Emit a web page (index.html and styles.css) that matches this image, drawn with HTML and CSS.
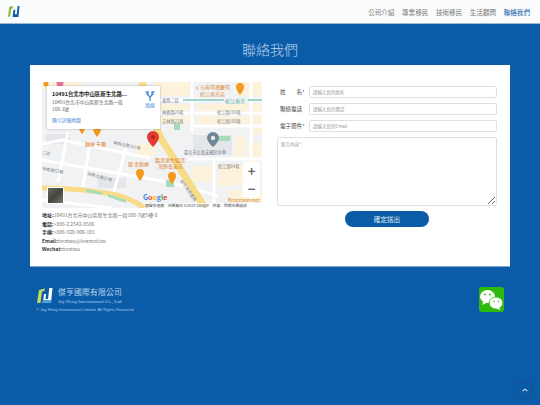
FILE: index.html
```html
<!DOCTYPE html>
<html lang="zh-Hant">
<head>
  <meta charset="UTF-8" />
  <meta name="viewport" content="width=device-width, initial-scale=1.0" />
  <title>聯絡我們</title>
  <link rel="stylesheet" href="styles.css">
</head>
<body>
  <header class="topbar">
    <svg class="logo" viewBox="0 0 14 14">
      <path d="M1 13 L2.500 2 L6.500 1 L6 4 L4.500 4 L3.500 12 Z" fill="#8dbb3e" />
      <path d="M6 13 L7 5 L9 5 L8.500 10 L10.500 10 L11.500 1 L13.500 1 L12.300 13 Z" fill="#0b5ca8" />
    </svg>
    <nav class="nav">
      <a>公司介紹</a>
      <a>專業移民</a>
      <a>技術移民</a>
      <a>生活顧問</a>
      <a class="active">聯絡我們</a>
    </nav>
  </header>

  <main class="content">
    <h1 class="title">聯絡我們</h1>
    <section class="card">
      <div class="left">
        <div class="map">
          <svg class="map-art" viewBox="0 0 220 126">
            <rect width="220" height="126" fill="#f1f2f4" />
            <g fill="#fdf3dc">
              <rect x="0" y="0" width="40" height="8" />
              <rect x="112" y="0" width="36" height="14" />
              <rect x="196" y="0" width="12" height="14" />
              <rect x="211" y="0" width="9" height="14" />
              <rect x="118" y="22" width="30" height="7" />
              <rect x="118" y="34" width="30" height="8" />
              <rect x="156" y="22" width="50" height="7" />
              <rect x="156" y="34" width="50" height="9" />
              <rect x="211" y="22" width="9" height="30" />
              <rect x="193" y="54" width="10" height="22" />
              <rect x="176" y="82" width="26" height="22" />
              <rect x="206" y="60" width="14" height="20" />
              <rect x="94" y="62" width="20" height="12" />
              <rect x="150" y="84" width="20" height="16" />
              <rect x="186" y="108" width="34" height="12" />
            </g>
            <g fill="#e4e6ea">
              <rect x="151" y="53" width="39" height="20" />
              <rect x="4" y="52" width="24" height="10" />
              <rect x="56" y="96" width="28" height="10" />
            </g>
            <g stroke="#fff" stroke-width="3" fill="none">
              <path d="M0 78 L131 101 L176 114" />
              <path d="M0 62 L20 58 L108 76" />
              <path d="M48 60 L41 105" />
              <path d="M84 66 L72 110" />
              <path d="M26 50 L16 100" />
              <path d="M113 18 H220" />
              <path d="M113 31 H220" />
              <path d="M150 44 H220" />
              <path d="M150 0 V50" />
              <path d="M209 0 V126" />
              <path d="M146 77 H220" />
              <path d="M172 77 V126" />
              <path d="M0 118 L70 126" />
            </g>
            <path d="M100 0 L112 41 L120 58 L160 121 L163 126" stroke="#f9dc87" stroke-width="7" fill="none" />
            <path d="M0 106 C25 106 55 109 75 113 C85 116 95 120 102 126" stroke="#f9dc87" stroke-width="5" fill="none" />
            <path d="M141 18 H220" stroke="#3fa98a" stroke-width="1" fill="none" />
            <rect x="182" y="15" width="24" height="7" fill="#f1f2f4" />
            <g fill="#a8dcb8">
              <path d="M44 107 L60 110 L60 113 L44 110 Z" />
              <path d="M66 112 L84 118 L84 121 L66 115 Z" />
              <rect x="124" y="98" width="8" height="7" />
              <rect x="132" y="41" width="6" height="7" />
              <rect x="174" y="54" width="14" height="5" />
            </g>
            <circle cx="18" cy="1" r="3.500" fill="#ee6f9a" />
            <circle cx="4" cy="2" r="2.500" fill="#f39a1e" />
            <g class="label-orange">
              <text x="43" y="64">麵屋 千壽</text>
              <text x="153" y="7">くら寿司資慶司</text>
              <text x="158" y="14">松江南京店</text>
              <text x="86" y="84">榮 串燒屋</text>
              <text x="113" y="80">臨津港生猛活</text>
              <text x="116" y="86">海鮮長安店</text>
              <text x="186" y="120">Broccoeeeeer</text>
            </g>
            <g class="label-grey">
              <text x="120" y="20">東路二段</text>
              <text x="120" y="32">林森路26巷</text>
              <text x="120" y="41">吉林路22巷</text>
              <text x="175" y="32">松江路106巷</text>
              <text x="175" y="41">松江路100巷</text>
              <text x="142" y="72">臺北市立長安國民中學</text>
              <text x="176" y="86">松江路64巷</text>
              <text x="71" y="62" transform="rotate(12 71 62)">林森北路107巷</text>
              <text x="45" y="93" transform="rotate(15 45 93)">林森北路67巷</text>
              <text x="0" y="72" transform="rotate(10 0 72)">二段</text>
              <text x="0" y="88" transform="rotate(10 0 88)">林森路53巷</text>
              <text x="138" y="99" transform="rotate(55 138 99)">新生高架道路</text>
            </g>
            <text class="label-teal" x="183" y="21">松江南京</text>
            <g fill="#f39a1e">
              <path d="M36 44 a4 4 0 1 1 8 0 c0 3 -4 8 -4 8 s-4 -5 -4 -8z" />
              <path d="M51 47 a4 4 0 1 1 8 0 c0 3 -4 8 -4 8 s-4 -5 -4 -8z" />
              <path d="M94 91 a4 4 0 1 1 8 0 c0 3 -4 8 -4 8 s-4 -5 -4 -8z" />
              <path d="M126 94 a4 4 0 1 1 8 0 c0 3 -4 8 -4 8 s-4 -5 -4 -8z" />
              <path d="M194 5 a4 4 0 1 1 8 0 c0 3 -4 8 -4 8 s-4 -5 -4 -8z" />
            </g>
            <path d="M165 56 a6 6 0 1 1 12 0 c0 4 -6 9 -6 9 s-6 -5 -6 -9z" fill="#6d8799" />
            <circle cx="171" cy="56" r="2.200" fill="#e4e6ea" />
            <path d="M105 55 a6 6 0 1 1 12 0 c0 4 -6 10 -6 10 s-6 -6 -6 -10z" fill="#e23b33" />
            <circle cx="111" cy="55" r="1.800" fill="#a81f1a" />
            <rect x="103" y="121" width="117" height="5" fill="#fff" opacity="0.8" />
            <text class="label-google" x="101" y="118"><tspan fill="#4285f4">G</tspan><tspan fill="#ea4335">o</tspan><tspan fill="#fbbc05">o</tspan><tspan fill="#4285f4">g</tspan><tspan fill="#34a853">l</tspan><tspan fill="#ea4335">e</tspan></text>
            <text class="label-attrib" x="103" y="125">鍵盤快速鍵　地圖資料 ©2023 Google　條款　回報地圖錯誤</text>
          </svg>
          <div class="map-info">
            <div class="map-text">
              <strong>10491台北市中山區新生北路...</strong>
              <p>10491台北市中山區新生北路一段<br>108-3號</p>
              <a>顯示詳細地圖</a>
            </div>
            <div class="map-route">
              <svg viewBox="0 0 10 10"><path d="M5 10 V6 L1.500 2.500 M5 6 L8.500 2.500 M0.500 1 H3 V3.500 M9.500 1 H7 V3.500" stroke="#3f86d8" stroke-width="1.300" fill="none" /></svg>
              <span>路線</span>
            </div>
          </div>
          <div class="map-thumb"></div>
          <div class="map-zoom"><span>+</span><span>−</span></div>
        </div>
        <ul class="info">
          <li><b>地址:</b>10491台北市中山區新生北路一段108-3號5樓-8</li>
          <li><b>電話:</b>+886-2 2542-8586</li>
          <li><b>手機:</b>+886-920-906-101</li>
          <li><b>Email:</b>tinatwu@livemail.tw</li>
          <li><b>Wechat:</b>tinatwu</li>
        </ul>
      </div>

      <form class="form">
        <label class="row"><span class="name">姓<i></i>名<em>*</em></span><input type="text" placeholder="請輸入您的姓名"></label>
        <label class="row"><span class="name">聯絡電話</span><input type="text" placeholder="請輸入您的電話"></label>
        <label class="row"><span class="name">電子郵件<em>*</em></span><input type="text" placeholder="請輸入您的Email"></label>
        <textarea placeholder="留言內容*"></textarea>
        <button type="button">確定送出</button>
      </form>
    </section>
  </main>

  <footer class="footer">
    <div class="brand">
      <div class="brand-top">
        <svg class="brand-logo" viewBox="0 0 18 18">
          <path d="M1 16 L3 3 L9 1.500 L8.500 4 L6 4.500 L4.500 16 Z" fill="#c5d95a" />
          <path d="M7 16 L8 7 L10 7 L9.500 12 L12 12 L13.300 1 L16.500 1 L15 16 Z" fill="#fff" />
          <path d="M6 16 L7 13 H15 V16 Z" fill="#4aa3df" />
        </svg>
        <div class="brand-name">
          <strong>傑亨國際有限公司</strong>
          <span>Jay Heng International Co., Ltd.</span>
        </div>
      </div>
      <p class="copy">© Jay Heng International Limited. All Rights Reserved.</p>
    </div>
    <div class="wechat">
      <svg viewBox="0 0 25 25">
        <ellipse cx="8.500" cy="9.500" rx="7.500" ry="6.500" fill="#fff" />
        <path d="M4 14 L3.500 18 L8 15.500 Z" fill="#fff" />
        <ellipse cx="17" cy="16" rx="6.800" ry="6" fill="#fff" stroke="#2dbb0e" stroke-width="0.800" />
        <path d="M20 20.500 L21.500 23 L17 21.500 Z" fill="#fff" />
        <circle cx="6" cy="7.500" r="0.900" fill="#2dbb0e" />
        <circle cx="11" cy="7.500" r="0.900" fill="#2dbb0e" />
        <circle cx="15" cy="14.500" r="0.800" fill="#2dbb0e" />
        <circle cx="19.500" cy="14.500" r="0.800" fill="#2dbb0e" />
      </svg>
    </div>
  </footer>

  <a class="to-top">
    <svg viewBox="0 0 10 6"><path d="M1 5 L5 1.500 L9 5" stroke="#cfe2f5" stroke-width="1.800" fill="none" /></svg>
  </a>
</body>
</html>
```

FILE: styles.css
```css
* {
  box-sizing: border-box;
}

html, body {
  height: 100%;
}

body {
  margin: 0;
  background-color: #0b5ca8;
  overflow: hidden;
  font-family: "Noto Sans CJK TC", "Liberation Sans", sans-serif;
  color: #333;
}

.topbar {
  height: 24px;
  background-color: #fafbfc;
  border-bottom: 1px solid #9fb9d3;
  display: flex;
  align-items: center;
  justify-content: space-between;
  padding: 0 10px 0 7px;
}

.logo {
  width: 13px;
  height: 13px;
}

.nav {
  display: flex;
  gap: 7.500px;
}

.nav a {
  font-size: 6.600px;
  color: #777;
}

.nav a.active {
  color: #0b5ca8;
}

.title {
  margin: 0;
  height: 41px;
  padding-top: 15px;
  text-align: center;
  font-size: 14px;
  line-height: 21px;
  font-weight: 300;
  color: #b9d2ea;
}

.card {
  margin: 0 30px;
  height: 202px;
  background-color: #fff;
  padding: 17px 13px 0 12px;
  display: flex;
  gap: 15px;
  border-bottom: 1px solid #7fa9d2;
}

.left, .form {
  width: 220px;
}

.map {
  position: relative;
  height: 126px;
  overflow: hidden;
}

.map-art {
  display: block;
  width: 220px;
  height: 126px;
}

.map-art text {
  font-family: "Noto Sans CJK TC", sans-serif;
}

.label-orange {
  font-size: 5px;
  fill: #d9822b;
}

.label-grey {
  font-size: 4.200px;
  fill: #7a818a;
}

.label-teal {
  font-size: 5px;
  fill: #3fa98a;
}

.label-google {
  font-size: 7px;
  font-weight: 700;
}

.label-attrib {
  font-size: 3.800px;
  fill: #555;
}

.map-info {
  position: absolute;
  left: 5px;
  top: 4px;
  width: 113px;
  height: 43px;
  background-color: #fff;
  box-shadow: 0 0 2px rgba(0, 0, 0, 0.3);
  padding: 4px 5px;
  display: flex;
  justify-content: space-between;
}

.map-text strong {
  display: block;
  font-size: 5.400px;
  line-height: 8px;
  color: #222;
  white-space: nowrap;
}

.map-text p {
  margin: 1px 0 4px;
  font-size: 4.800px;
  line-height: 6.500px;
  color: #5f6368;
  white-space: nowrap;
}

.map-text a {
  display: block;
  font-size: 4.800px;
  line-height: 7px;
  color: #3f86d8;
}

.map-route {
  display: flex;
  flex-direction: column;
  align-items: center;
  padding-top: 1px;
  gap: 1px;
}

.map-route svg {
  width: 10px;
  height: 10px;
}

.map-route span {
  font-size: 4.800px;
  line-height: 6px;
  color: #3f86d8;
}

.map-thumb {
  position: absolute;
  left: 5px;
  top: 105px;
  width: 17px;
  height: 17px;
  background: linear-gradient(135deg, #6b6a60, #45453f 50%, #77756a);
  border: 1px solid #fff;
}

.map-zoom {
  position: absolute;
  left: 201px;
  top: 80px;
  width: 17px;
  height: 35px;
  background-color: #fff;
  display: flex;
  flex-direction: column;
  font-size: 13px;
  font-weight: 700;
  line-height: 17.500px;
  text-align: center;
  color: #666;
}

.info {
  list-style: none;
  margin: 0;
  padding: 3px 0 0;
  font-size: 5px;
  line-height: 8.600px;
  color: #777;
}

.info b {
  color: #333;
}

.form {
  display: flex;
  flex-direction: column;
  align-items: center;
  padding-top: 4px;
}

.row {
  width: 100%;
  display: flex;
  align-items: center;
  height: 12px;
  margin-bottom: 5px;
}

.name {
  width: 32px;
  padding-left: 3px;
  font-size: 5.500px;
  white-space: nowrap;
  color: #444;
}

.name i {
  display: inline-block;
  width: 11px;
}

.name em {
  font-style: normal;
  color: #0b5ca8;
}

input, textarea {
  font-family: inherit;
  font-size: 4.500px;
  background-color: #fff;
  border: 1px solid #e0e0e0;
  border-radius: 2px;
  outline: none;
}

input {
  flex: 1;
  height: 12px;
  padding: 0 3px;
}

textarea {
  display: block;
  width: 100%;
  height: 69px;
  padding: 3px;
}

input::placeholder, textarea::placeholder {
  color: #999;
}

button {
  margin-top: 5px;
  width: 84px;
  height: 16px;
  border: none;
  border-radius: 8px;
  background-color: #0b5ca8;
  color: #e3eef8;
  font-family: inherit;
  font-size: 6.600px;
  padding: 0;
}

.footer {
  display: flex;
  justify-content: space-between;
  padding: 20px 36px 0 36px;
}

.brand-top {
  display: flex;
  align-items: center;
  gap: 4px;
}

.brand-logo {
  width: 18px;
  height: 18px;
}

.brand-name {
  display: flex;
  flex-direction: column;
  font-family: "Liberation Serif", "Noto Sans CJK TC", serif;
  color: #b9d2ea;
}

.brand-name strong {
  font-size: 7.800px;
  line-height: 10px;
  font-weight: 400;
  letter-spacing: 0.200px;
}

.brand-name span {
  font-size: 5px;
  line-height: 7px;
}

.copy {
  margin: 2px 0 0;
  font-family: "Liberation Sans", sans-serif;
  font-size: 4.100px;
  line-height: 6px;
  color: #a9c6e3;
}

.wechat {
  width: 25px;
  height: 25px;
  background-color: #2dbb0e;
  border-radius: 3px;
}

.wechat svg {
  display: block;
  width: 25px;
  height: 25px;
}

.to-top {
  position: fixed;
  right: 6px;
  bottom: 6px;
  width: 18px;
  height: 18px;
  border-radius: 50%;
  border: 1px solid #1d4f86;
  background-color: #0b5ca8;
  display: flex;
  align-items: center;
  justify-content: center;
}

.to-top svg {
  width: 6px;
  height: 4px;
}
```
